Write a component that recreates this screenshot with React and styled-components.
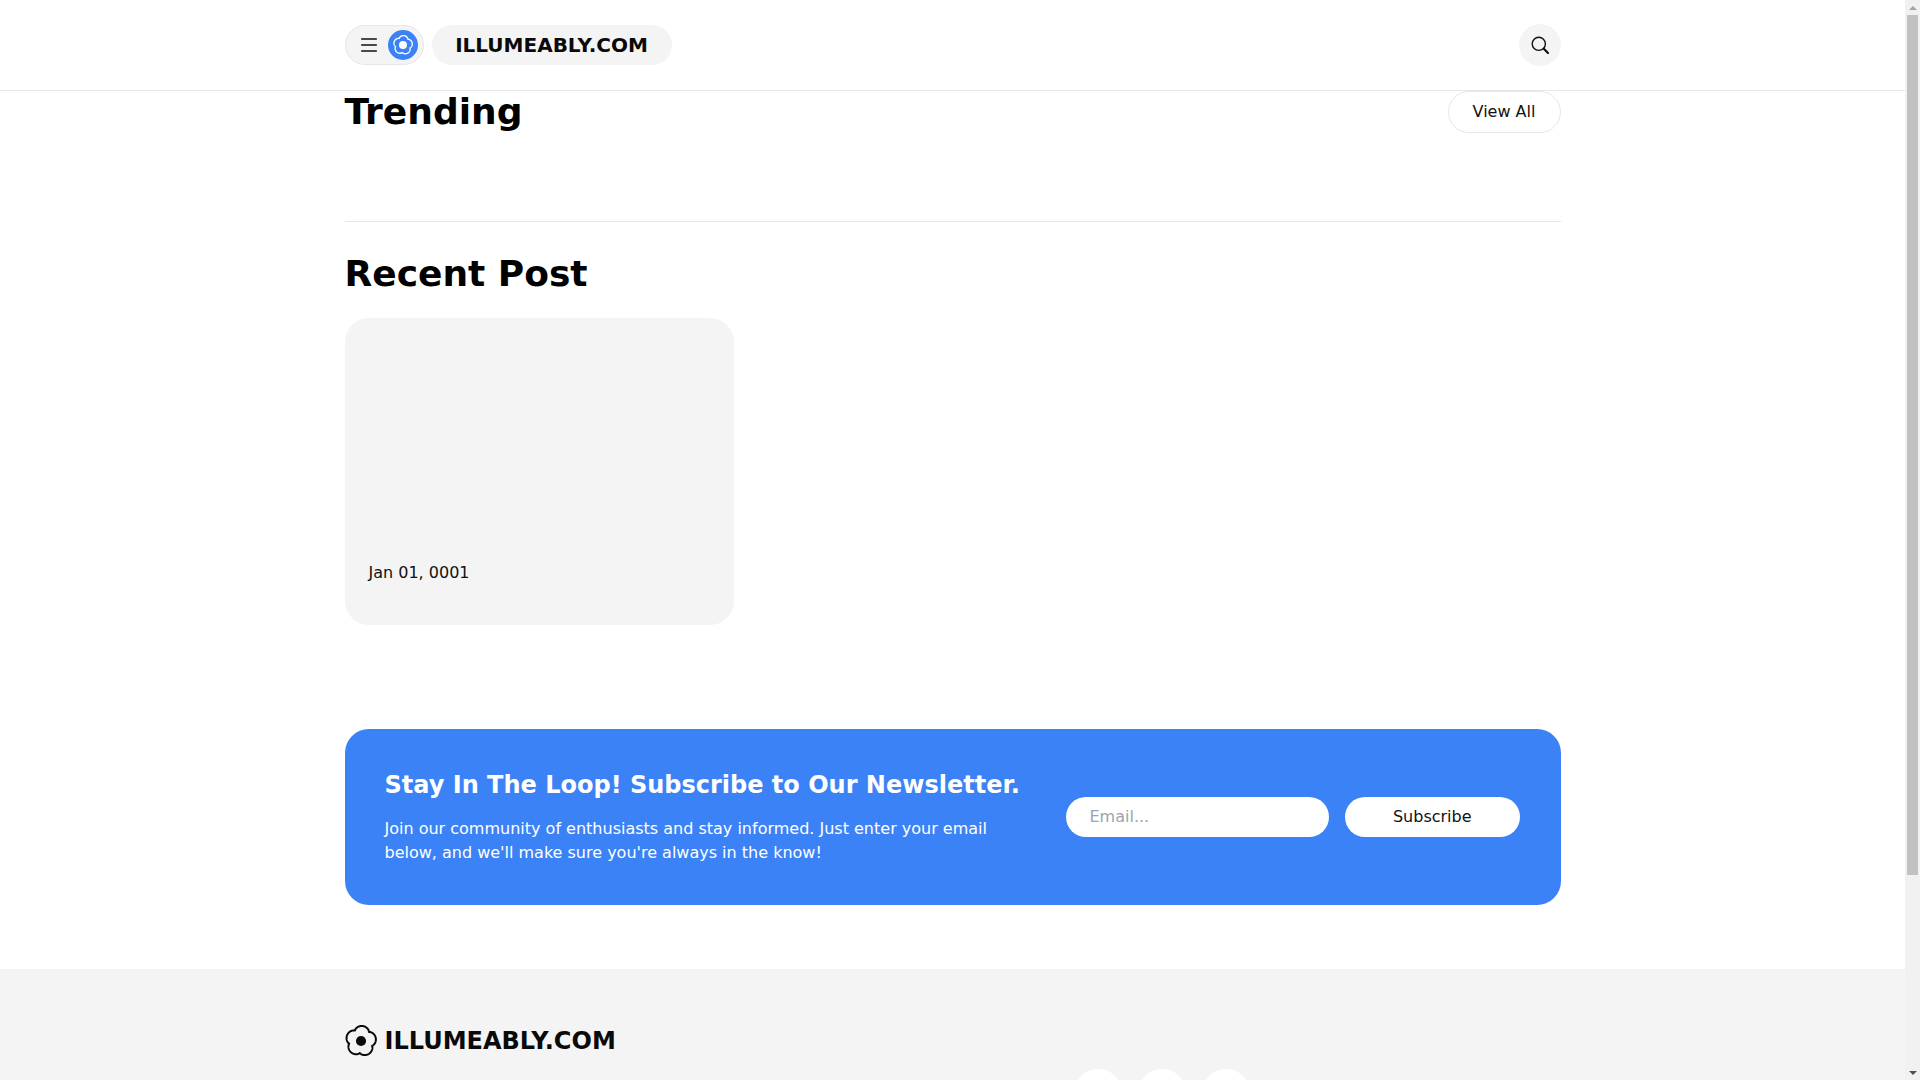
import React from "react";
import styled, { createGlobalStyle } from "styled-components";
import { FaFacebookF, FaXTwitter, FaInstagram } from "react-icons/fa6";

const GlobalStyle = createGlobalStyle`
  *, *::before, *::after { box-sizing: border-box; }
  html, body { margin: 0; padding: 0; background: #fff; }
  body { font-family: "DejaVu Sans", sans-serif; color: #000; font-size: 16px; line-height: 24px; }
`;

const Viewport = styled.div`
  display: flex;
  align-items: flex-start;
`;

const Page = styled.div`
  flex: 1;
  min-width: 0;
`;

const ScrollRail = styled.div`
  flex: 0 0 15px;
  height: 100vh;
  position: sticky;
  top: 0;
  background: #f1f1f1;
  display: flex;
  flex-direction: column;
`;

const RailButton = styled.div`
  height: 15px;
  flex: none;
  display: flex;
  align-items: center;
  justify-content: center;
  margin-top: ${(p) => (p.$down ? "auto" : "0")};
  &::before {
    content: "";
    width: 0;
    height: 0;
    border-left: 4px solid transparent;
    border-right: 4px solid transparent;
    border-bottom: ${(p) => (p.$down ? "0" : "4px solid #a3a3a3")};
    border-top: ${(p) => (p.$down ? "4px solid #505050" : "0")};
  }
`;

const RailThumb = styled.div`
  height: 860px;
  margin: 0 2px;
  background: #c1c1c1;
`;

const Container = styled.div`
  width: 1216px;
  margin: 0 auto;
`;

const Header = styled.header`
  height: 91px;
  border-bottom: 1px solid #e5e7eb;
`;

const HeaderRow = styled(Container)`
  height: 90px;
  display: flex;
  align-items: center;
  justify-content: space-between;
`;

const HeaderLeft = styled.div`
  display: flex;
  align-items: center;
  gap: 8px;
`;

const MenuPill = styled.button`
  width: 79px;
  height: 40px;
  padding: 0 5px 0 13px;
  display: flex;
  align-items: center;
  justify-content: space-between;
  border: 1px solid #e5e7eb;
  border-radius: 999px;
  background: #f4f4f4;
  color: #111;
`;

const LogoBadge = styled.span`
  width: 30px;
  height: 30px;
  border-radius: 50%;
  background: #3b82f6;
  display: flex;
  align-items: center;
  justify-content: center;
`;

const BrandPill = styled.a`
  height: 40px;
  width: 240px;
  display: flex;
  align-items: center;
  justify-content: center;
  border-radius: 999px;
  background: #f4f4f4;
  font-size: 20px;
  font-weight: 700;
  color: #0a0a0a;
`;

const SearchButton = styled.button`
  width: 42px;
  height: 42px;
  padding: 0;
  border: 0;
  border-radius: 50%;
  background: #f4f4f4;
  color: #111;
  display: flex;
  align-items: center;
  justify-content: center;
`;

const TrendingSection = styled(Container)`
  padding-bottom: 88px;
`;

const TrendingRow = styled.div`
  display: flex;
  align-items: center;
  justify-content: space-between;
`;

const Title = styled.h2`
  margin: 0;
  font-size: 36px;
  line-height: 40px;
  font-weight: 700;
  color: #000;
`;

const ViewAll = styled.a`
  width: 113px;
  height: 42px;
  display: flex;
  align-items: center;
  justify-content: center;
  border: 1px solid #e5e7eb;
  border-radius: 999px;
  background: #fff;
  font-size: 16px;
  color: #111;
`;

const Divider = styled(Container)`
  height: 1px;
  background: #e5e7eb;
`;

const RecentSection = styled(Container)`
  padding-top: 32px;
`;

const PostGrid = styled.div`
  margin-top: 24px;
  display: grid;
  grid-template-columns: repeat(3, 1fr);
  gap: 24px;
`;

const PostCard = styled.article`
  height: 307px;
  padding: 0 24px 40px;
  border-radius: 24px;
  background: #f4f4f4;
  display: flex;
  flex-direction: column;
  justify-content: flex-end;
`;

const PostDate = styled.time`
  font-size: 16px;
  line-height: 24px;
  color: #111;
`;

const Newsletter = styled(Container)`
  margin-top: 104px;
  padding: 40px 40.5px 40px 40px;
  border-radius: 24px;
  background: #3b82f6;
  color: #fff;
  display: flex;
  align-items: center;
  gap: 40px;
`;

const NewsletterText = styled.div`
  flex: 1;
  min-width: 0;
`;

const NewsletterTitle = styled.h3`
  margin: 0 0 16px;
  font-size: 24px;
  line-height: 32px;
  font-weight: 700;
  white-space: nowrap;
`;

const NewsletterBody = styled.p`
  margin: 0;
  font-size: 16px;
  line-height: 24px;
`;

const NewsletterForm = styled.form`
  flex: 0 0 454.5px;
  display: flex;
  gap: 16px;
`;

const EmailInput = styled.input`
  width: 263px;
  height: 40px;
  padding: 0 24px 2px;
  border: 0;
  border-radius: 999px;
  background: #fff;
  font: 16px "DejaVu Sans", sans-serif;
  color: #111;
  &::placeholder { color: #9ca3af; opacity: 1; }
`;

const SubscribeButton = styled.button`
  flex: 1;
  height: 40px;
  padding: 0 0 2px;
  border: 0;
  border-radius: 999px;
  background: #fff;
  font: 16px "DejaVu Sans", sans-serif;
  color: #111;
`;

const Footer = styled.footer`
  margin-top: 64px;
  height: 349px;
  padding-top: 56px;
  background: #f4f4f4;
`;

const FooterRow = styled(Container)`
  display: flex;
`;

const FooterBrand = styled.div`
  flex: 0 0 729px;
  display: flex;
  align-items: center;
  align-self: flex-start;
  gap: 8px;
  font-size: 24px;
  line-height: 32px;
  font-weight: 700;
  color: #0a0a0a;
`;

const Socials = styled.div`
  margin-top: 44px;
  display: flex;
  gap: 16px;
`;

const SocialLink = styled.a`
  width: 48px;
  height: 48px;
  border-radius: 50%;
  background: #fff;
  color: #111;
  display: flex;
  align-items: center;
  justify-content: center;
`;

const flowerPath = (() => {
  const pts = [];
  for (let i = 0; i < 180; i++) {
    const t = (i / 180) * Math.PI * 2;
    const lobe = Math.pow(Math.abs(Math.cos(2.5 * t + 0.55)), 0.7);
    const r = 8.9 + 2.4 * lobe;
    pts.push(`${(12 + r * Math.cos(t)).toFixed(2)} ${(12 + r * Math.sin(t)).toFixed(2)}`);
  }
  return `M${pts.join("L")}Z`;
})();

const Flower = ({ size, color, dot, strokeWidth }) => (
  <svg width={size} height={size} viewBox="0 0 24 24" fill="none" aria-hidden="true">
    <path d={flowerPath} stroke={color} strokeWidth={strokeWidth} strokeLinejoin="round" />
    <circle cx="12" cy="12" r={dot} fill={color} />
  </svg>
);

const MenuIcon = () => (
  <svg width="20" height="20" viewBox="0 0 20 20" fill="none" stroke="currentColor" strokeWidth="1.5" strokeLinecap="round" aria-hidden="true">
    <path d="M2.7 4h14.6M2.7 10h14.6M2.7 16h14.6" />
  </svg>
);

const SearchIcon = () => (
  <svg width="20" height="20" viewBox="0 0 20 20" fill="none" stroke="currentColor" aria-hidden="true">
    <circle cx="8.8" cy="8.8" r="6.6" strokeWidth="1.4" />
    <path d="M13.8 13.8 18 18" strokeWidth="2.2" strokeLinecap="round" />
  </svg>
);

export default function App() {
  return (
    <Viewport>
      <GlobalStyle />
      <Page>
        <Header>
          <HeaderRow>
            <HeaderLeft>
              <MenuPill aria-label="Menu">
                <MenuIcon />
                <LogoBadge>
                  <Flower size={20} color="#fff" dot={4.8} strokeWidth={1.6} />
                </LogoBadge>
              </MenuPill>
              <BrandPill>ILLUMEABLY.COM</BrandPill>
            </HeaderLeft>
            <SearchButton aria-label="Search">
              <SearchIcon />
            </SearchButton>
          </HeaderRow>
        </Header>
        <main>
          <TrendingSection>
            <TrendingRow>
              <Title>Trending</Title>
              <ViewAll>View All</ViewAll>
            </TrendingRow>
          </TrendingSection>
          <Divider />
          <RecentSection>
            <Title>Recent Post</Title>
            <PostGrid>
              <PostCard>
                <PostDate>Jan 01, 0001</PostDate>
              </PostCard>
            </PostGrid>
          </RecentSection>
          <Newsletter>
            <NewsletterText>
              <NewsletterTitle>Stay In The Loop! Subscribe to Our Newsletter.</NewsletterTitle>
              <NewsletterBody>
                Join our community of enthusiasts and stay informed. Just enter your email below, and we'll make sure you're always in the know!
              </NewsletterBody>
            </NewsletterText>
            <NewsletterForm>
              <EmailInput type="email" placeholder="Email..." />
              <SubscribeButton type="button">Subscribe</SubscribeButton>
            </NewsletterForm>
          </Newsletter>
        </main>
        <Footer>
          <FooterRow>
            <FooterBrand>
              <Flower size={32} color="#0a0a0a" dot={3.8} strokeWidth={1.5} />
              ILLUMEABLY.COM
            </FooterBrand>
            <Socials>
              <SocialLink aria-label="Facebook"><FaFacebookF size={16} /></SocialLink>
              <SocialLink aria-label="X"><FaXTwitter size={16} /></SocialLink>
              <SocialLink aria-label="Instagram"><FaInstagram size={16} /></SocialLink>
            </Socials>
          </FooterRow>
        </Footer>
      </Page>
      <ScrollRail aria-hidden="true">
        <RailButton />
        <RailThumb />
        <RailButton $down />
      </ScrollRail>
    </Viewport>
  );
}
